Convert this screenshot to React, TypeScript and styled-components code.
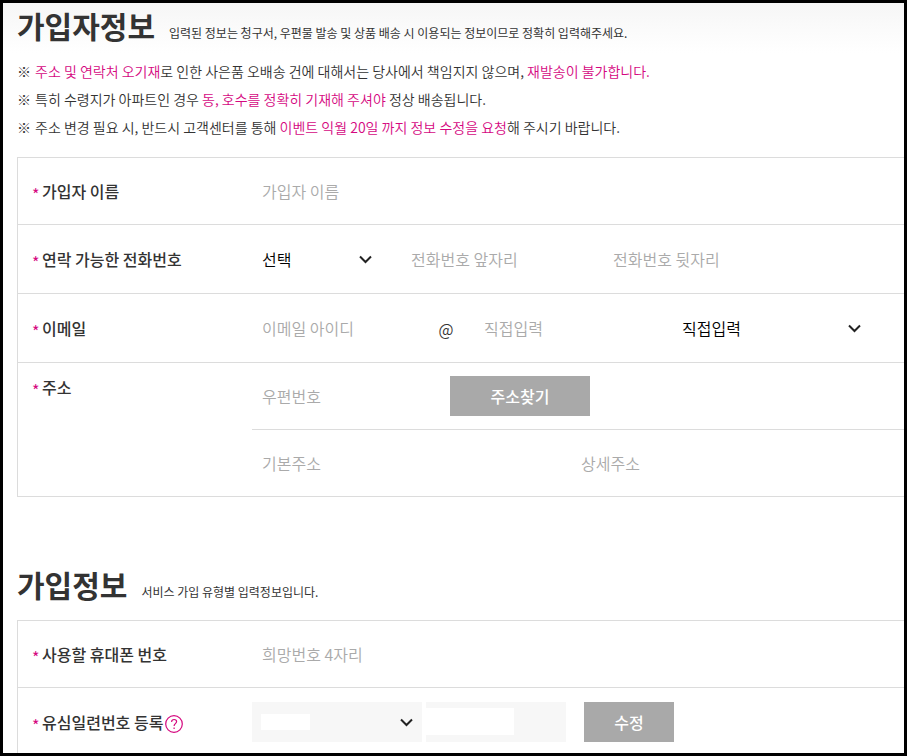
import React, { ReactNode, useId } from 'react';
import styled, { createGlobalStyle } from 'styled-components';

const MAGENTA = '#d5087f';
const LINE = '#dcdcdc';
const FONT = '"Noto Sans CJK KR", "Noto Sans", sans-serif';

const GlobalStyle = createGlobalStyle`
  *, *::before, *::after { box-sizing: border-box; }
  body { margin: 0; background: #fff; }
  body, input, select, button { font-family: ${FONT}; }
`;

const Page = styled.main`
  display: flex;
  flex-direction: column;
  min-height: 100vh;
  padding-left: 14px;
  border: 3px solid #000;
  color: #333;
  background: linear-gradient(#f6f6f6, #fff 50px);
`;

const SectionHeader = styled.header`
  display: flex;
  align-items: baseline;
  gap: 14px;
`;

const Title = styled.h2`
  margin: 0;
  font-size: 30px;
  line-height: 44px;
  font-weight: 700;
`;

const Description = styled.p`
  margin: 0;
  font-size: 12px;
  line-height: 20px;
`;

const Notes = styled.ul`
  margin: 10px 0 16px;
  padding: 0;
  list-style: none;
`;

const Note = styled.li`
  display: flex;
  gap: 4px;
  font-size: 14px;
  line-height: 28px;
  font-weight: 350;

  &::before { content: '※'; }
`;

const Accent = styled.em`
  font-style: normal;
  color: ${MAGENTA};
`;

const FormTable = styled.div<{ $open?: boolean }>`
  border: 1px solid ${LINE};
  border-width: 1px 0 0 1px;
  flex: ${p => (p.$open ? '1 0 auto' : 'none')};
`;

const Row = styled.div<{ $tall?: boolean; $top?: boolean }>`
  display: grid;
  grid-template-columns: 234px minmax(0, 1fr);
  align-items: ${p => (p.$top ? 'start' : 'center')};
  min-height: ${p => (p.$tall ? 69 : 67)}px;
  border-bottom: 1px solid ${LINE};
`;

const LastRow = styled(Row)`
  min-height: 0;
  padding-top: 3px;
  border-bottom: 0;
`;

const LabelCell = styled.div<{ $padded?: boolean }>`
  display: flex;
  align-items: center;
  gap: 2px;
  padding: ${p => (p.$padded ? 12 : 0)}px 0 0 14px;
  font-size: 16px;
  line-height: 24px;
  font-weight: 500;
`;

const Star = styled.span`
  width: 8px;
  padding-top: 6px;
  font-size: 16px;
  line-height: 18px;
  font-weight: 400;
  color: ${MAGENTA};
`;

const Fields = styled.div<{ $ruled?: boolean }>`
  display: flex;
  align-items: center;
  gap: 20px;
  border-top: ${p => (p.$ruled ? `1px solid ${LINE}` : '0')};
  min-height: ${p => (p.$ruled ? 67 : 66)}px;
`;

const Input = styled.input<{ $w: number; $filled?: boolean }>`
  flex: 0 1 ${p => p.$w}px;
  width: ${p => p.$w}px;
  min-width: 0;
  height: 40px;
  padding: 0 10px;
  border: 0;
  outline-color: ${MAGENTA};
  background: ${p => (p.$filled ? '#f7f7f7' : 'transparent')};
  font-size: 16px;
  font-weight: 350;
  color: #000;

  &::placeholder { color: #aaa; opacity: 1; }
`;

const SelectBox = styled.div<{ $w: number; $filled?: boolean }>`
  position: relative;
  display: flex;
  align-items: center;
  flex: 0 1 ${p => p.$w}px;
  min-width: 0;
  height: 40px;
  background: ${p => (p.$filled ? '#f7f7f7' : 'transparent')};
`;

const NativeSelect = styled.select`
  appearance: none;
  width: 100%;
  height: 100%;
  padding: 0 30px 0 10px;
  border: 0;
  background: transparent;
  outline-color: ${MAGENTA};
  font-size: 16px;
  font-weight: 350;
  color: #000;
`;

const Chevron = styled.svg`
  position: absolute;
  right: 9px;
  width: 13px;
  height: 9px;
  pointer-events: none;
`;

const MaskedInput = styled.div`
  position: relative;
  display: flex;
  flex: 0 1 140px;
  min-width: 0;
`;

const Mask = styled.span<{ $x: number; $y: number; $w: number; $h: number }>`
  position: absolute;
  left: ${p => p.$x}px;
  top: ${p => p.$y}px;
  width: ${p => p.$w}px;
  height: ${p => p.$h}px;
  background: #fff;
  pointer-events: none;
`;

const Button = styled.button<{ $w: number }>`
  flex: 0 0 ${p => p.$w}px;
  height: 40px;
  padding: 0;
  border: 0;
  background: #a9a9a9;
  color: #fff;
  font-size: 16px;
  font-weight: 500;
  cursor: pointer;
`;

const At = styled.span`
  width: 16px;
  padding-top: 2px;
  font-size: 16px;
  font-weight: 350;
  text-align: center;
`;

const HelpButton = styled.button`
  display: flex;
  padding: 4px 0 0;
  border: 0;
  background: none;
  color: ${MAGENTA};
  cursor: pointer;
`;

const SecondSection = styled.section`
  display: flex;
  flex-direction: column;
  flex: 1 0 auto;
  margin-top: 65px;
`;

const SecondHeader = styled(SectionHeader)`
  margin-bottom: 14px;
`;

const ZipFields = styled(Fields)`
  gap: 18px;
`;

const SimFields = styled(Fields)`
  gap: 4px;
  min-height: 62px;
`;

const SimButtonWrap = styled.div`
  display: flex;
  padding-left: 14px;
`;

function SelectField({ label, w, options, filled, id, children }: {
  label?: string; w: number; options: string[]; filled?: boolean; id?: string; children?: ReactNode;
}) {
  return (
    <SelectBox $w={w} $filled={filled}>
      <NativeSelect id={id} aria-label={label}>
        {options.map(o => <option key={o}>{o}</option>)}
      </NativeSelect>
      {children}
      <Chevron viewBox="0 0 13 9" fill="none" stroke="#222" strokeWidth="2" aria-hidden="true">
        <path d="M1 1.5 6.5 7 12 1.5" />
      </Chevron>
    </SelectBox>
  );
}

function FieldLabel({ text, htmlFor, padded, children }: {
  text: string; htmlFor: string; padded?: boolean; children?: ReactNode;
}) {
  return (
    <LabelCell $padded={padded}>
      <Star aria-hidden="true">*</Star>
      <label htmlFor={htmlFor}>{text}</label>
      {children}
    </LabelCell>
  );
}

export default function App() {
  const id = useId();
  return (
    <>
      <GlobalStyle />
      <Page>
        <section>
          <SectionHeader>
            <Title>가입자정보</Title>
            <Description>입력된 정보는 청구서, 우편물 발송 및 상품 배송 시 이용되는 정보이므로 정확히 입력해주세요.</Description>
          </SectionHeader>
          <Notes>
            <Note>
              <span><Accent>주소 및 연락처 오기재</Accent>로 인한 사은품 오배송 건에 대해서는 당사에서 책임지지 않으며, <Accent>재발송이 불가합니다.</Accent></span>
            </Note>
            <Note>
              <span>특히 수령지가 아파트인 경우 <Accent>동, 호수를 정확히 기재해 주셔야</Accent> 정상 배송됩니다.</span>
            </Note>
            <Note>
              <span>주소 변경 필요 시, 반드시 고객센터를 통해 <Accent>이벤트 익월 20일 까지 정보 수정을 요청</Accent>해 주시기 바랍니다.</span>
            </Note>
          </Notes>
          <FormTable>
            <Row>
              <FieldLabel text="가입자 이름" htmlFor={`${id}name`} />
              <Fields><Input $w={320} id={`${id}name`} placeholder="가입자 이름" /></Fields>
            </Row>
            <Row $tall>
              <FieldLabel text="연락 가능한 전화번호" htmlFor={`${id}phone`} />
              <Fields>
                <SelectField id={`${id}phone`} w={129} options={['선택', '010', '011']} />
                <Input $w={182} aria-label="전화번호 앞자리" placeholder="전화번호 앞자리" />
                <Input $w={182} aria-label="전화번호 뒷자리" placeholder="전화번호 뒷자리" />
              </Fields>
            </Row>
            <Row $tall>
              <FieldLabel text="이메일" htmlFor={`${id}mail`} />
              <Fields>
                <Input $w={166} id={`${id}mail`} placeholder="이메일 아이디" />
                <At>@</At>
                <Input $w={178} aria-label="이메일 도메인" placeholder="직접입력" />
                <SelectField label="이메일 도메인 선택" w={198} options={['직접입력', 'naver.com', 'gmail.com']} />
              </Fields>
            </Row>
            <Row $top>
              <FieldLabel text="주소" htmlFor={`${id}zip`} padded />
              <div>
                <ZipFields>
                  <Input $w={180} id={`${id}zip`} placeholder="우편번호" />
                  <Button $w={140} type="button">주소찾기</Button>
                </ZipFields>
                <Fields $ruled>
                  <Input $w={299} aria-label="기본주소" placeholder="기본주소" />
                  <Input $w={299} aria-label="상세주소" placeholder="상세주소" />
                </Fields>
              </div>
            </Row>
          </FormTable>
        </section>
        <SecondSection>
          <SecondHeader>
            <Title>가입정보</Title>
            <Description>서비스 가입 유형별 입력정보입니다.</Description>
          </SecondHeader>
          <FormTable $open>
            <Row>
              <FieldLabel text="사용할 휴대폰 번호" htmlFor={`${id}wish`} />
              <Fields><Input $w={320} id={`${id}wish`} placeholder="희망번호 4자리" /></Fields>
            </Row>
            <LastRow>
              <FieldLabel text="유심일련번호 등록" htmlFor={`${id}sim`}>
                <HelpButton type="button" aria-label="유심일련번호 도움말">
                  <svg width="18" height="18" viewBox="0 0 18 18" fill="none" stroke="currentColor" strokeWidth="1.2">
                    <circle cx="9" cy="9" r="8.3" />
                    <path d="M6.5 6.8c.2-1.5 1.2-2.3 2.6-2.3 1.5 0 2.5.8 2.5 2.1 0 2-2.5 2-2.5 4.3" />
                    <path d="M9.1 12.5v1.4" />
                  </svg>
                </HelpButton>
              </FieldLabel>
              <SimFields>
                <SelectField id={`${id}sim`} w={170} options={['']} filled>
                  <Mask $x={9} $y={12} $w={49} $h={16} />
                </SelectField>
                <MaskedInput>
                  <Input $w={140} $filled aria-label="유심일련번호" />
                  <Mask $x={0} $y={6} $w={88} $h={27} />
                </MaskedInput>
                <SimButtonWrap><Button $w={90} type="button">수정</Button></SimButtonWrap>
              </SimFields>
            </LastRow>
          </FormTable>
        </SecondSection>
      </Page>
    </>
  );
}
